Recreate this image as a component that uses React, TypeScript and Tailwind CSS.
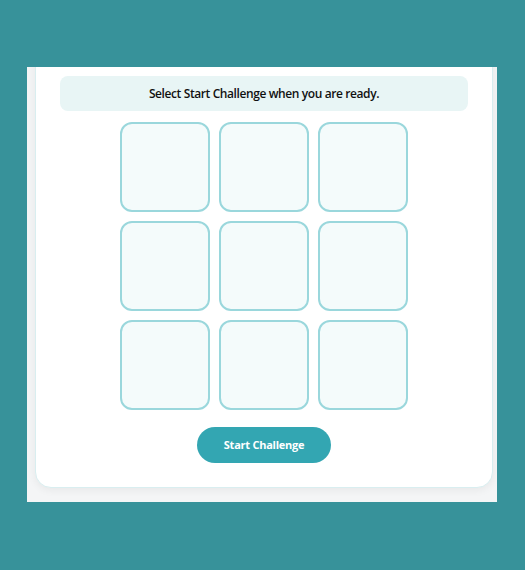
import React from "react";

export default function App() {
  const cells = Array.from({ length: 9 });
  return (
    <div className="w-[525px] h-[570px] bg-[#37929a] pt-[67px] pl-[27px]" style={{ fontFamily: '"Open Sans", "Noto Sans", sans-serif' }}>
      <div className="w-[470px] h-[435px] overflow-hidden bg-[#f4f5f6] flex flex-col">
        <div className="ml-[8px] mt-[-40px] w-[458px] h-[461px] bg-white rounded-[16px] border border-[#d9eef0] shadow-[0_2px_8px_rgba(0,0,0,0.06)] flex flex-col items-center px-6 pt-[48px]">
          <div className="w-full h-[35px] rounded-[8px] bg-[#e8f5f5] flex items-center justify-center text-[12px] font-semibold tracking-[-0.4px] text-[#111111]">
            Select Start Challenge when you are ready.
          </div>
          <div className="mt-[11px] grid grid-cols-[90px_90px_90px] gap-[9px]">
            {cells.map((_, i) => (
              <div key={i} className="w-[90px] h-[90px] rounded-[12px] border-2 border-[#9ad7dc] bg-[#f4fbfb]" />
            ))}
          </div>
          <button className="mt-[17px] w-[134px] h-[36px] rounded-full bg-[#33a6b2] text-white text-[11px] font-bold tracking-[-0.25px]">
            Start Challenge
          </button>
        </div>
      </div>
    </div>
  );
}
